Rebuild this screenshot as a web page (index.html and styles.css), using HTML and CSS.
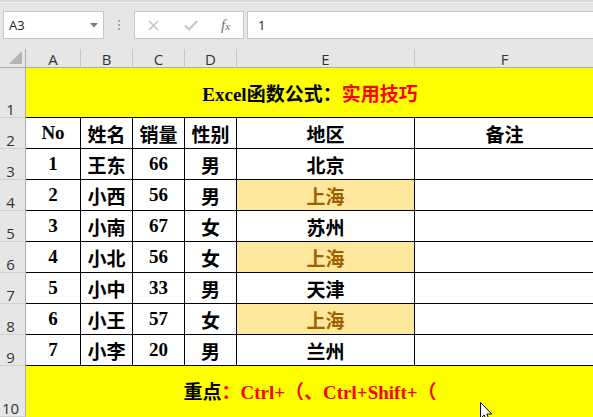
FILE: index.html
```html
<!DOCTYPE html>
<html lang="zh">
<head>
<meta charset="utf-8">
<title>Excel</title>
<link rel="stylesheet" href="styles.css">
</head>
<body>
<div class="app">
  <div class="toolbar">
    <div class="namebox">
      <span class="namebox-text">A3</span>
      <svg class="dropdown" width="8" height="5" viewBox="0 0 8 5"><polygon points="0,0 8,0 4,4.5" fill="#7a7a7a"/></svg>
    </div>
    <div class="dots"><span></span><span></span><span></span></div>
    <div class="fbuttons">
      <svg class="icon-x" width="11" height="11" viewBox="0 0 11 11"><path d="M1 1 L10 10 M10 1 L1 10" stroke="#c3c3c3" stroke-width="1.6" fill="none"/></svg>
      <svg class="icon-check" width="14" height="11" viewBox="0 0 14 11"><path d="M1 5.5 L5 9.5 L13 1" stroke="#c3c3c3" stroke-width="2" fill="none"/></svg>
      <span class="icon-fx"><i>f</i><i class="x">x</i></span>
    </div>
    <div class="finput">1</div>
  </div>

  <div class="sheet">
    <div class="corner"><svg width="14" height="14" viewBox="0 0 14 14"><polygon points="0,13 13,13 13,0" fill="#b3b3b3"/></svg></div>
    <div class="colhead">A</div>
    <div class="colhead">B</div>
    <div class="colhead">C</div>
    <div class="colhead">D</div>
    <div class="colhead">E</div>
    <div class="colhead last">F</div>

    <div class="rowhead">1</div>
    <div class="cell banner title">Excel函数公式<span class="black">：</span><span class="red">实用技巧</span></div>

    <div class="rowhead">2</div>
    <div class="cell">No</div><div class="cell">姓名</div><div class="cell">销量</div><div class="cell">性别</div><div class="cell">地区</div><div class="cell last">备注</div>

    <div class="rowhead">3</div>
    <div class="cell">1</div><div class="cell">王东</div><div class="cell">66</div><div class="cell">男</div><div class="cell">北京</div><div class="cell last"></div>

    <div class="rowhead">4</div>
    <div class="cell">2</div><div class="cell">小西</div><div class="cell">56</div><div class="cell">男</div><div class="cell hl">上海</div><div class="cell last"></div>

    <div class="rowhead">5</div>
    <div class="cell">3</div><div class="cell">小南</div><div class="cell">67</div><div class="cell">女</div><div class="cell">苏州</div><div class="cell last"></div>

    <div class="rowhead">6</div>
    <div class="cell">4</div><div class="cell">小北</div><div class="cell">56</div><div class="cell">女</div><div class="cell hl">上海</div><div class="cell last"></div>

    <div class="rowhead">7</div>
    <div class="cell">5</div><div class="cell">小中</div><div class="cell">33</div><div class="cell">男</div><div class="cell">天津</div><div class="cell last"></div>

    <div class="rowhead">8</div>
    <div class="cell">6</div><div class="cell">小王</div><div class="cell">57</div><div class="cell">女</div><div class="cell hl">上海</div><div class="cell last"></div>

    <div class="rowhead">9</div>
    <div class="cell">7</div><div class="cell">小李</div><div class="cell">20</div><div class="cell">男</div><div class="cell">兰州</div><div class="cell last"></div>

    <div class="rowhead">10</div>
    <div class="cell banner foot">重点<span class="red">：Ctrl+（、Ctrl+Shift+（</span></div>
  </div>

  <svg class="cursor" width="13" height="20" viewBox="0 0 13 20"><path d="M0.5 0.5 L0.5 16.5 L4.2 13 L6.8 19 L9.3 18 L6.8 12 L11.8 12 Z" fill="#ffffff" stroke="#000000" stroke-width="1"/></svg>
</div>
</body>
</html>
```

FILE: styles.css
```css
html, body {
  margin: 0;
  padding: 0;
  background: #ffffff;
}

.app {
  position: relative;
  width: 593px;
  height: 417px;
  overflow: hidden;
  font-family: "Open Sans", "Noto Sans", sans-serif;
}

.toolbar {
  box-sizing: border-box;
  height: 49px;
  background: #e6e6e6;
  border-top: 2px solid #d9d9d9;
  display: flex;
  align-items: flex-start;
  padding-top: 9px;
  box-shadow: inset 0 1px 0 #f2f2f2;
}

.namebox {
  box-sizing: border-box;
  margin-left: 3px;
  width: 101px;
  height: 28px;
  background: #ffffff;
  border: 1px solid #c6c6c6;
  display: flex;
  align-items: center;
  justify-content: space-between;
  padding: 0 5px 0 5px;
}

.namebox-text {
  font-size: 13px;
  color: #222;
}

.dropdown {
  display: block;
  margin-top: 1px;
}

.dots {
  width: 30px;
  height: 28px;
  display: flex;
  flex-direction: column;
  align-items: center;
  justify-content: center;
  gap: 2px;
}

.dots span {
  display: block;
  width: 2px;
  height: 2px;
  background: #a6a6a6;
}

.fbuttons {
  box-sizing: border-box;
  width: 110px;
  height: 28px;
  background: #ffffff;
  border: 1px solid #c6c6c6;
  display: flex;
  align-items: center;
  padding-left: 13px;
}

.icon-x {
  display: block;
}

.icon-check {
  display: block;
  margin-left: 25px;
}

.icon-fx {
  margin-left: 23px;
  font-family: "Liberation Serif", serif;
  color: #6e6e6e;
  font-size: 15px;
  line-height: 1;
}

.icon-fx .x {
  font-size: 11px;
}

.finput {
  box-sizing: border-box;
  margin-left: 3px;
  flex: 1;
  height: 28px;
  background: #ffffff;
  border: 1px solid #c6c6c6;
  border-right: none;
  font-size: 13px;
  color: #222;
  line-height: 26px;
  padding-left: 10px;
}

.sheet {
  display: grid;
  grid-template-columns: 26px 55px 52px 52px 52px 178px 179px;
  grid-template-rows: 19px 50px repeat(8, 31px) 51px;
  width: 594px;
}

.corner,
.colhead,
.rowhead,
.cell {
  box-sizing: border-box;
}

.corner {
  background: #e6e6e6;
  border-right: 1px solid #ababab;
  border-bottom: 1px solid #ababab;
  display: flex;
  align-items: flex-end;
  justify-content: flex-end;
  padding: 0 2px 2px 0;
}

.corner svg {
  display: block;
}

.colhead {
  background: #e6e6e6;
  border-right: 1px solid #c4c4c4;
  border-bottom: 1px solid #ababab;
  font-size: 15px;
  color: #333;
  display: flex;
  align-items: center;
  justify-content: center;
  padding-top: 1px;
}

.colhead.last {
  border-right: none;
}

.rowhead {
  background: #e6e6e6;
  border-right: 1px solid #ababab;
  border-bottom: 1px solid #cfcfcf;
  font-size: 15px;
  color: #333;
  line-height: 16px;
  display: flex;
  align-items: flex-end;
  justify-content: center;
  padding-right: 4px;
  padding-bottom: 0;
}

.cell {
  border-right: 1px solid #000;
  border-bottom: 1px solid #000;
  background: #ffffff;
  font-family: "Liberation Serif", "Noto Sans CJK SC", serif;
  font-weight: 700;
  font-size: 19px;
  color: #000;
  display: flex;
  align-items: center;
  justify-content: center;
  white-space: nowrap;
}

.cell.last {
  border-right: none;
}

.cell.hl {
  background: #ffe89c;
  color: #9c6000;
}

.banner {
  grid-column: 2 / 8;
  background: #ffff00;
  border-right: none;
}

.foot {
  border-bottom: none;
  padding-bottom: 3px;
}

.red {
  color: #ff0000;
}

.black {
  color: #000;
}

.cursor {
  position: absolute;
  left: 480px;
  top: 402px;
}
```
